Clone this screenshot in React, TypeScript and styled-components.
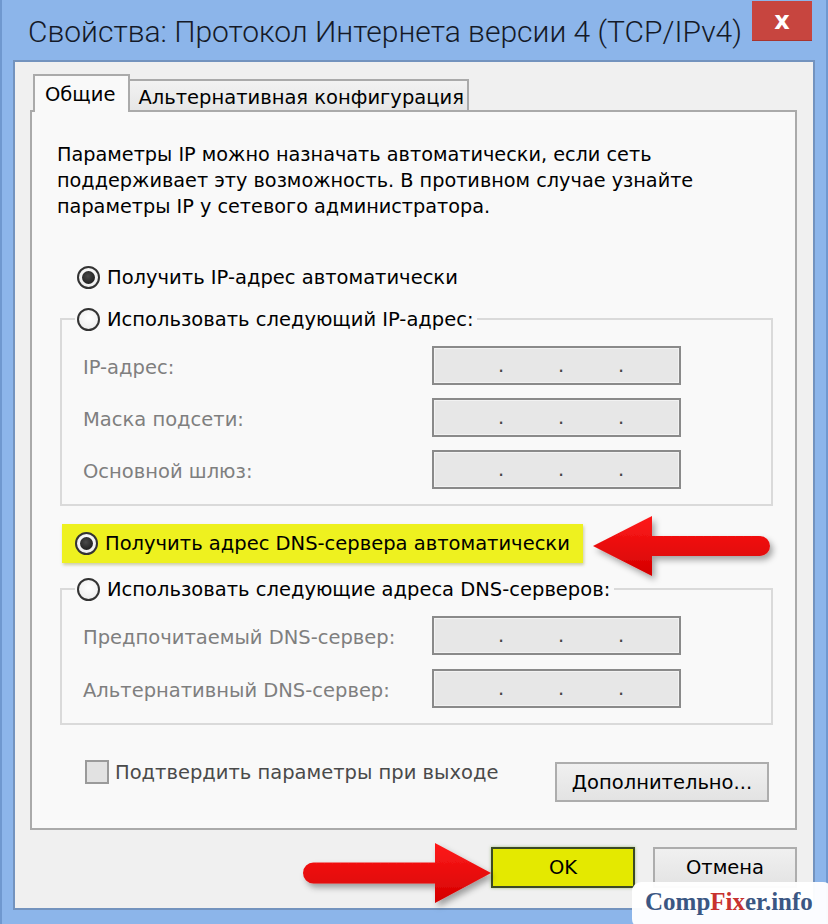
import React from "react";
import styled, { createGlobalStyle } from "styled-components";

const Global = createGlobalStyle`
  html, body { margin: 0; padding: 0; background: #8ab3e9; }
  body { font-family: "DejaVu Sans", sans-serif; }
  * { box-sizing: border-box; }
`;

const Window = styled.div`
  position: relative;
  width: 828px;
  height: 924px;
  background: #8cb5ea;
  box-shadow: inset 2px 0 0 #6f98cf, inset -2px 0 0 #6f98cf;
  display: flex;
  flex-direction: column;
  overflow: hidden;
`;

const TitleBar = styled.div`
  height: 60px;
  display: flex;
  align-items: flex-start;
`;

const Title = styled.div`
  margin: 12px 0 0 28px;
  font-family: Roboto, "Open Sans", sans-serif;
  font-weight: 300;
  font-size: 30px;
  line-height: 40px;
  color: #151a28;
  white-space: nowrap;
`;

const CloseButton = styled.div`
  margin: 1px 16px 0 auto;
  width: 60px;
  height: 40px;
  background: #c7453f;
  border-bottom: 1px solid #a8342f;
  color: #fff;
  font-family: "DejaVu Sans", sans-serif;
  font-size: 24px;
  font-weight: 700;
  display: flex;
  align-items: center;
  justify-content: center;
`;

const Client = styled.div`
  margin: 0 13px 14px 13px;
  height: 850px;
  border: 2px solid #7393be;
  background: #f0f0f0;
  padding: 14px 16px 0 15px;
  display: flex;
  flex-direction: column;
`;

const TabStrip = styled.div`
  height: 36px;
  display: flex;
  align-items: flex-end;
  margin-bottom: -2px;
  position: relative;
  z-index: 1;
`;

const Tab = styled.div<{ $active?: boolean }>`
  height: ${(p) => (p.$active ? "38px" : "31px")};
  margin-left: ${(p) => (p.$active ? "3px" : "0")};
  margin-bottom: ${(p) => (p.$active ? "0" : "2px")};
  padding: ${(p) => (p.$active ? "0 13px 0 10px" : "0 3px 0 8px")};
  border: 2px solid #aaaaaa;
  border-bottom: none;
  border-left: ${(p) => (p.$active ? "2px solid #aaaaaa" : "none")};
  background: ${(p) => (p.$active ? "#f9f9f9" : "linear-gradient(#f2f2f2, #e6e6e6)")};
  font-size: 19.5px;
  line-height: ${(p) => (p.$active ? "38px" : "33px")};
  color: #000;
  white-space: nowrap;
`;

const Panel = styled.div`
  height: 720px;
  border: 2px solid #aaaaaa;
  background: #f9f9f9;
  display: flex;
  flex-direction: column;
  padding: 30px 0 0 0;
`;

const Intro = styled.p`
  margin: 0 0 0 25px;
  font-size: 19.25px;
  line-height: 26px;
  color: #000;
`;

const RadioRow = styled.label`
  display: flex;
  align-items: center;
  height: 24px;
  gap: 7px;
  font-size: 19.5px;
  color: #000;
  white-space: nowrap;
`;

const TopRadioRow = styled(RadioRow)`
  margin: 45px 0 0 45px;
`;

const RadioDot = styled.span<{ $checked?: boolean }>`
  width: 23px;
  height: 23px;
  border-radius: 50%;
  border: 2px solid #333;
  background: radial-gradient(circle at 50% 40%, #ffffff, #e9e9e9);
  display: flex;
  align-items: center;
  justify-content: center;
  flex: none;
  &::after {
    content: "";
    display: ${(p) => (p.$checked ? "block" : "none")};
    width: 13px;
    height: 13px;
    border-radius: 50%;
    background: radial-gradient(circle at 45% 40%, #4a4a4a, #111);
  }
`;

const Group = styled.fieldset<{ $mt: number }>`
  margin: ${(p) => p.$mt}px 22px 0 28px;
  border: 2px solid #dadada;
  padding: 15px 0 15px 21px;
  min-width: 0;
`;

const Legend = styled.legend`
  margin-left: -8px;
  padding: 0 4px 0 2px;
  height: 24px;
`;

const FieldGrid = styled.div<{ $gap: number }>`
  display: grid;
  grid-template-columns: 349px 249px;
  row-gap: ${(p) => p.$gap}px;
  align-items: center;
`;

const FieldLabel = styled.span`
  font-size: 19.5px;
  color: #7f7f7f;
  white-space: nowrap;
  padding-top: 3px;
`;

const IpBox = styled.div`
  height: 39px;
  border: 2px solid #8a8a8a;
  background: #e7e7e7;
  box-shadow: inset 0 0 0 1px #f2f2f2;
  display: flex;
  font-size: 19.5px;
  line-height: 35px;
  color: #444;
`;

const Octet = styled.span<{ $w: number }>`
  width: ${(p) => p.$w}px;
`;

const Dot = styled.span`
  width: 2px;
  display: flex;
  justify-content: center;
  overflow: visible;
`;

const Highlight = styled.div`
  margin: 18px 0 0 30px;
  width: 521px;
  height: 39px;
  background: #eef11f;
  box-shadow: 1px 2px 3px rgba(120, 120, 0, 0.35);
  display: flex;
  align-items: center;
  padding-left: 13px;
`;

const BottomRow = styled.div`
  margin: 35px 26px 0 53px;
  display: flex;
  align-items: flex-start;
  justify-content: space-between;
`;

const CheckRow = styled.label`
  display: flex;
  align-items: center;
  gap: 6px;
  height: 24px;
  font-size: 19.5px;
  color: #4a4a4a;
  white-space: nowrap;
`;

const CheckBox = styled.span`
  width: 24px;
  height: 24px;
  border: 2px solid #9a9a9a;
  background: #e2e2e2;
  flex: none;
`;

const Button = styled.div<{ $w: number; $h: number; $primary?: boolean }>`
  width: ${(p) => p.$w}px;
  height: ${(p) => p.$h}px;
  border: ${(p) => (p.$primary ? "2px solid #3c4a25" : "2px solid #adadad")};
  background: ${(p) => (p.$primary ? "#e4e900" : "linear-gradient(#f0f0f0, #e3e3e3)")};
  box-shadow: ${(p) => (p.$primary ? "0 0 3px rgba(90, 140, 40, 0.5)" : "none")};
  display: flex;
  align-items: center;
  justify-content: center;
  font-size: 19.5px;
  color: #000;
  white-space: nowrap;
`;

const MoreButton = styled(Button)`
  margin-top: 2px;
`;

const DialogButtons = styled.div`
  margin-top: 17px;
  display: flex;
  justify-content: flex-end;
  gap: 18px;
`;

const ArrowSvg = styled.svg<{ $x: number; $y: number }>`
  position: absolute;
  left: ${(p) => p.$x}px;
  top: ${(p) => p.$y}px;
  overflow: visible;
  pointer-events: none;
`;

const Watermark = styled.div`
  position: absolute;
  left: 632px;
  top: 882px;
  width: 200px;
  height: 46px;
  background: rgba(255, 255, 255, 0.96);
  border-radius: 9px;
  padding: 4px 0 0 13px;
  font-family: "Liberation Serif", serif;
  font-weight: 700;
  font-size: 25px;
  line-height: 32px;
  color: #3b5783;
  white-space: nowrap;
`;

const Fix = styled.span`
  color: #c8322f;
`;

const IpField = () => (
  <IpBox>
    <Octet $w={66} />
    <Dot>.</Dot>
    <Octet $w={58} />
    <Dot>.</Dot>
    <Octet $w={58} />
    <Dot>.</Dot>
  </IpBox>
);

const Arrow = ({ y, tail, tip, headBack, headHalf, shaft }: { y: number; tail: number; tip: number; headBack: number; headHalf: number; shaft: number }) => {
  const cy = headHalf + 4;
  const w = Math.abs(tail - tip) + 20;
  const dir = tail > tip ? 1 : -1;
  const o = dir === 1 ? tip : tail;
  const lx = (v: number) => v - o + 4;
  const h = shaft / 2;
  const d =
    `M ${lx(tip)} ${cy} ` +
    `L ${lx(headBack)} ${cy - headHalf} ` +
    `L ${lx(headBack)} ${cy - h} ` +
    `L ${lx(tail) - dir * h} ${cy - h} ` +
    `A ${h} ${h} 0 0 ${dir === 1 ? 1 : 0} ${lx(tail) - dir * h} ${cy + h} ` +
    `L ${lx(headBack)} ${cy + h} ` +
    `L ${lx(headBack)} ${cy + headHalf} Z`;
  return (
    <ArrowSvg $x={o - 4} $y={y - cy} width={w + 10} height={headHalf * 2 + 14}>
      <defs>
        <linearGradient id={`g${y}`} x1="0" y1="0" x2="0" y2="1">
          <stop offset="0" stopColor="#ff1a1a" />
          <stop offset="1" stopColor="#d40000" />
        </linearGradient>
        <filter id={`s${y}`} x="-10%" y="-20%" width="130%" height="160%">
          <feDropShadow dx="3" dy="4" stdDeviation="3" floodColor="#000" floodOpacity="0.35" />
        </filter>
      </defs>
      <path d={d} fill={`url(#g${y})`} filter={`url(#s${y})`} strokeLinejoin="round" />
    </ArrowSvg>
  );
};

export default function App() {
  return (
    <>
      <Global />
      <Window>
        <TitleBar>
          <Title>Свойства: Протокол Интернета версии 4 (TCP/IPv4)</Title>
          <CloseButton>x</CloseButton>
        </TitleBar>
        <Client>
          <TabStrip>
            <Tab $active>Общие</Tab>
            <Tab>Альтернативная конфигурация</Tab>
          </TabStrip>
          <Panel>
            <Intro>
              Параметры IP можно назначать автоматически, если сеть
              <br />
              поддерживает эту возможность. В противном случае узнайте
              <br />
              параметры IP у сетевого администратора.
            </Intro>
            <TopRadioRow>
              <RadioDot $checked />
              Получить IP-адрес автоматически
            </TopRadioRow>
            <Group $mt={18}>
              <Legend>
                <RadioRow>
                  <RadioDot />
                  Использовать следующий IP-адрес:
                </RadioRow>
              </Legend>
              <FieldGrid $gap={13}>
                <FieldLabel>IP-адрес:</FieldLabel>
                <IpField />
                <FieldLabel>Маска подсети:</FieldLabel>
                <IpField />
                <FieldLabel>Основной шлюз:</FieldLabel>
                <IpField />
              </FieldGrid>
            </Group>
            <Highlight>
              <RadioRow>
                <RadioDot $checked />
                Получить адрес DNS-сервера автоматически
              </RadioRow>
            </Highlight>
            <Group $mt={14}>
              <Legend>
                <RadioRow>
                  <RadioDot />
                  Использовать следующие адреса DNS-серверов:
                </RadioRow>
              </Legend>
              <FieldGrid $gap={14}>
                <FieldLabel>Предпочитаемый DNS-сервер:</FieldLabel>
                <IpField />
                <FieldLabel>Альтернативный DNS-сервер:</FieldLabel>
                <IpField />
              </FieldGrid>
            </Group>
            <BottomRow>
              <CheckRow>
                <CheckBox />
                Подтвердить параметры при выходе
              </CheckRow>
              <MoreButton $w={214} $h={40}>Дополнительно...</MoreButton>
            </BottomRow>
          </Panel>
          <DialogButtons>
            <Button $w={144} $h={41} $primary>OK</Button>
            <Button $w={144} $h={41}>Отмена</Button>
          </DialogButtons>
        </Client>
        <Arrow y={546} tip={593} headBack={652} tail={770} headHalf={30} shaft={20} />
        <Arrow y={873} tip={491} headBack={435} tail={303} headHalf={30} shaft={21} />
        <Watermark>
          Comp<Fix>Fix</Fix>er.info
        </Watermark>
      </Window>
    </>
  );
}
